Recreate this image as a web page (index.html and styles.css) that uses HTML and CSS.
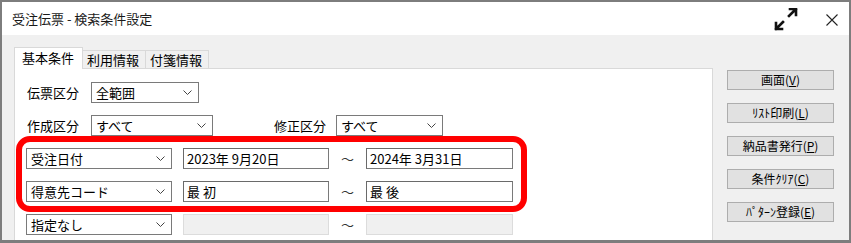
FILE: index.html
```html
<!DOCTYPE html>
<html>
<head>
	<meta charset="utf-8">
	<title>受注伝票 - 検索条件設定</title>
	<link rel="stylesheet" href="styles.css">
</head>
<body>
	<div class="window">
		<div class="titlebar">
			<span class="title">受注伝票 - 検索条件設定</span>
			<svg class="expand" width="26" height="24" viewBox="0 0 26 24">
				<path d="M3 21 L10 14 M16 8 L23 1 M3 21 L3 15 M3 21 L9 21 M23 1 L17 1 M23 1 L23 7" stroke="#111" stroke-width="2.6" fill="none" stroke-linecap="square"/>
			</svg>
			<svg class="close" width="12" height="12" viewBox="0 0 12 12">
				<path d="M0.5 0.5 L11.5 11.5 M11.5 0.5 L0.5 11.5" stroke="#222" stroke-width="1.1" fill="none"/>
			</svg>
		</div>
		<div class="body">
			<div class="tabarea">
				<div class="tabs">
					<div class="tab active">基本条件</div>
					<div class="tab">利用情報</div>
					<div class="tab">付箋情報</div>
				</div>
				<div class="panel">
					<div class="row">
						<span class="label">伝票区分</span>
						<div class="select w108">全範囲<svg class="chev" width="9" height="6" viewBox="0 0 9 6"><path d="M0.5 0.5 L4.5 4.5 L8.5 0.5" stroke="#444" fill="none"/></svg></div>
					</div>
					<div class="row">
						<span class="label">作成区分</span>
						<div class="select w122">すべて<svg class="chev" width="9" height="6" viewBox="0 0 9 6"><path d="M0.5 0.5 L4.5 4.5 L8.5 0.5" stroke="#444" fill="none"/></svg></div>
						<span class="label label2">修正区分</span>
						<div class="select w107">すべて<svg class="chev" width="9" height="6" viewBox="0 0 9 6"><path d="M0.5 0.5 L4.5 4.5 L8.5 0.5" stroke="#444" fill="none"/></svg></div>
					</div>
					<div class="highlight">
						<div class="row">
							<div class="select w146">受注日付<svg class="chev" width="9" height="6" viewBox="0 0 9 6"><path d="M0.5 0.5 L4.5 4.5 L8.5 0.5" stroke="#444" fill="none"/></svg></div>
							<div class="field">2023年 9月20日</div>
							<span class="tilde">～</span>
							<div class="field wide">2024年 3月31日</div>
						</div>
						<div class="row last">
							<div class="select w146">得意先コード<svg class="chev" width="9" height="6" viewBox="0 0 9 6"><path d="M0.5 0.5 L4.5 4.5 L8.5 0.5" stroke="#444" fill="none"/></svg></div>
							<div class="field">最 初</div>
							<span class="tilde">～</span>
							<div class="field wide">最 後</div>
						</div>
					</div>
					<div class="row">
						<div class="select w146">指定なし<svg class="chev" width="9" height="6" viewBox="0 0 9 6"><path d="M0.5 0.5 L4.5 4.5 L8.5 0.5" stroke="#444" fill="none"/></svg></div>
						<div class="field disabled"></div>
						<span class="tilde">～</span>
						<div class="field wide disabled"></div>
					</div>
				</div>
			</div>
			<div class="buttons">
				<div class="btn">画面(<u>V</u>)</div>
				<div class="btn">ﾘｽﾄ印刷(<u>L</u>)</div>
				<div class="btn">納品書発行(<u>P</u>)</div>
				<div class="btn">条件ｸﾘｱ(<u>C</u>)</div>
				<div class="btn">ﾊﾟﾀｰﾝ登録(<u>E</u>)</div>
			</div>
		</div>
	</div>
</body>
</html>
```
FILE: styles.css
```css
body{margin: 0;font-family: "Noto Sans CJK JP", sans-serif;font-size: 13px;color: #000;background: #fff;}
.window{width: 851px;height: 243px;box-sizing: border-box;border: 2px solid #7d7d7d;border-bottom-width: 3px;overflow: hidden;display: flex;flex-direction: column;background: #f0f0f0;}
.titlebar{height: 33px;flex: none;background: #fff;display: flex;align-items: center;padding-left: 10px;}
.title{flex: 1;line-height: 16px;color: #1a1a1a;}
.expand{margin-right: 27px;margin-top: 2px;}
.close{margin-right: 11px;margin-top: 2px;}
.body{flex: 1;display: flex;padding: 12px 0 0 12px;}
.tabarea{width: 699px;display: flex;flex-direction: column;}
.tabs{display: flex;align-items: flex-end;height: 21px;}
.tab{height: 18px;line-height: 18px;box-sizing: border-box;border: 1px solid #d9d9d9;border-bottom: none;background: #f0f0f0;padding: 0 4px;width: 64px;margin-left: -1px;}
.tab.active{height: 22px;line-height: 20px;background: #fff;width: 69px;padding-left: 7px;margin-left: 0;margin-bottom: -1px;position: relative;z-index: 1;}
.panel{flex: 1;background: #fff;border: 1px solid #d9d9d9;border-bottom: none;padding: 13px 0 0 11px;position: relative;}
.row{display: flex;align-items: center;height: 21px;margin-bottom: 12px;}
.row.last{margin-bottom: 0;}
.highlight{position: relative;margin-bottom: 12px;}
.highlight::after{content: "";position: absolute;left: -10px;right: 185px;top: -12px;bottom: -10px;border: 6px solid #f00;border-radius: 14px;pointer-events: none;}
.label{width: 64px;padding-left: 1px;line-height: 19px;}
.label2{margin-left: 60px;width: 62px;}
.select{height: 21px;box-sizing: border-box;border: 1px solid #7a7a7a;background: #fff;display: flex;align-items: center;justify-content: space-between;padding: 0 6px 0 4px;line-height: 19px;}
.w108{width: 108px;}
.w122{width: 122px;}
.w107{width: 107px;}
.w146{width: 146px;}
.chev{flex: none;}
.field{width: 146px;height: 21px;box-sizing: border-box;border: 1px solid #7a7a7a;border-top-color: #6a6a6a;border-left-color: #6a6a6a;margin-left: 11px;padding-left: 3px;line-height: 19px;background: #fff;}
.field.wide{width: 147px;margin-left: 0;}
.field.disabled{background: #f0f0f0;border-color: #dcdcdc;}
.tilde{width: 37px;text-align: center;color: #333;}
.buttons{margin: 23px 0 0 14px;display: flex;flex-direction: column;gap: 13px;}
.btn{width: 107px;height: 20px;box-sizing: border-box;border: 1px solid #adadad;background: #e1e1e1;text-align: center;font-size: 12px;line-height: 18px;}
```
